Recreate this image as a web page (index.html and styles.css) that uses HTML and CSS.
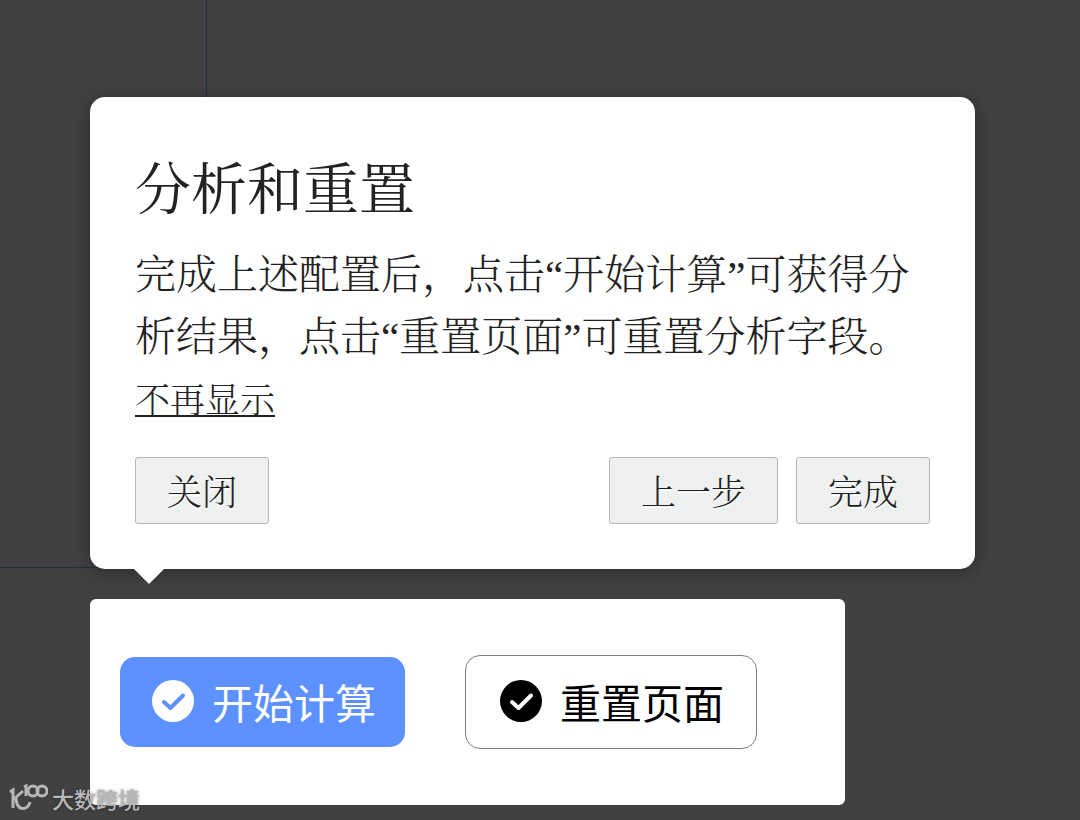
FILE: index.html
```html
<!DOCTYPE html>
<html lang="zh-CN">
<head>
    <meta charset="UTF-8">
    <meta name="viewport" content="width=device-width, initial-scale=1.0">
    <title>分析和重置</title>
    <link rel="stylesheet" href="styles.css">
</head>
<body>
    <div class="side-panel"></div>

    <main class="guide">
        <section class="popover" role="dialog" aria-labelledby="guideTitle">
            <h1 class="popover-title" id="guideTitle">分析和重置</h1>
            <p class="popover-text">完成上述配置后，点击“开始计算”可获得分析结果，点击“重置页面”可重置分析字段。</p>
            <a class="popover-skip" href="#">不再显示</a>
            <div class="popover-footer">
                <button class="step-button" type="button">关闭</button>
                <div class="step-group">
                    <button class="step-button" type="button">上一步</button>
                    <button class="step-button" type="button">完成</button>
                </div>
            </div>
        </section>

        <section class="target">
            <button class="action-button primary" type="button">
                <svg class="action-icon" viewBox="0 0 42 42" aria-hidden="true">
                    <circle cx="21" cy="21" r="21" fill="currentColor"/>
                    <path class="tick" d="M12 22 L18.5 28 L31 15.5"/>
                </svg>
                开始计算
            </button>
            <button class="action-button" type="button">
                <svg class="action-icon" viewBox="0 0 42 42" aria-hidden="true">
                    <circle cx="21" cy="21" r="21" fill="currentColor"/>
                    <path class="tick" d="M12 22 L18.5 28 L31 15.5"/>
                </svg>
                重置页面
            </button>
        </section>
    </main>

    <div class="watermark">
        <svg class="watermark-logo" viewBox="0 0 40 28" aria-hidden="true">
            <path d="M2 8 L5 6 V24 M15 7 L6 15 M8 13 C8 28 20 27 22 18"/>
            <path d="M16 3 L18 2 V12"/>
            <circle cx="25" cy="7" r="5"/>
            <circle cx="34" cy="7" r="5"/>
        </svg>
        <span>大数跨境</span>
    </div>
</body>
</html>
```
FILE: styles.css
```css
body {
    position: relative;
    min-height: 100vh;
    margin: 0;
    box-sizing: border-box;
    padding: 97px 90px 15px;
    background-color: #414141;
    color: #222;
    font-family: "Liberation Serif", "Noto Serif CJK SC", "Noto Sans CJK SC", serif;
    font-weight: 300;
}

h1, p {
    margin: 0;
    font-weight: 300;
}

button {
    font-family: inherit;
    font-weight: inherit;
    cursor: pointer;
}

/* dimmed panel behind the guide */
.side-panel {
    position: absolute;
    top: 0;
    left: 0;
    width: 206px;
    height: 567px;
    border-right: 1px solid #242f49;
    border-bottom: 1px solid #242f49;
}

.guide {
    position: relative;
    display: flex;
    flex-direction: column;
    gap: 30px;
}

.popover {
    position: relative;
    box-sizing: border-box;
    max-width: 885px;
    padding: 47px 45px 45px;
    background-color: white;
    border-radius: 15px;
    box-shadow: 0 3px 18px rgba(0, 0, 0, 0.35);
}

/* arrow pointing at the highlighted area */
.popover::after {
    content: "";
    position: absolute;
    top: 100%;
    left: 44px;
    border: 15px solid transparent;
    border-top-color: white;
    border-bottom: 0;
}

.popover-title {
    margin-bottom: 8px;
    font-size: 56px;
    font-weight: 400;
    line-height: 92px;
}

.popover-text {
    font-size: 41px;
    line-height: 62px;
}

.popover-skip {
    display: inline-block;
    margin-bottom: 21px;
    color: inherit;
    font-size: 35px;
    line-height: 68px;
    text-decoration-thickness: 2px;
    text-underline-offset: 2px;
    text-decoration-skip-ink: none;
}

.popover-footer, .step-group {
    display: flex;
    flex-wrap: wrap;
    gap: 18px;
}

.popover-footer {
    justify-content: space-between;
}

.step-button {
    padding: 9px 31px 2px;
    border: 1px solid #b4b7b8;
    border-radius: 3px;
    background-color: #eff0f0;
    color: #222;
    font-size: 35px;
    line-height: 54px;
    text-shadow: 0 2px 0 white;
}

.target {
    display: flex;
    flex-wrap: wrap;
    align-items: center;
    gap: 60px;
    box-sizing: border-box;
    max-width: 755px;
    padding: 56px 30px;
    background-color: white;
    border-radius: 6px;
}

.action-button {
    display: flex;
    align-items: center;
    gap: 18px;
    padding: 16px 32px 18px 34px;
    border: 1px solid #7f7981;
    border-radius: 15px;
    background-color: white;
    color: black;
    font-family: "Noto Sans CJK SC", sans-serif;
    font-size: 41px;
    font-weight: 400;
    line-height: 58px;
}

.action-button.primary {
    border: 0;
    padding: 15px 29px 17px 32px;
    background-color: #5c91ff;
    color: white;
}

.action-icon {
    width: 42px;
    height: 42px;
}

.tick {
    fill: none;
    stroke: white;
    stroke-width: 4;
    stroke-linecap: round;
    stroke-linejoin: round;
}

.primary .tick {
    stroke: #5c91ff;
}

.watermark {
    position: absolute;
    left: 8px;
    bottom: 6px;
    display: flex;
    align-items: center;
    gap: 4px;
    color: #b8b8b8;
    font-family: "Noto Sans CJK SC", sans-serif;
    font-size: 22px;
    font-weight: 500;
    line-height: 32px;
    text-shadow: 0 0 3px rgba(0, 0, 0, 0.5);
}

.watermark-logo {
    width: 40px;
    height: 28px;
    fill: none;
    stroke: currentColor;
    stroke-width: 3;
}
```
